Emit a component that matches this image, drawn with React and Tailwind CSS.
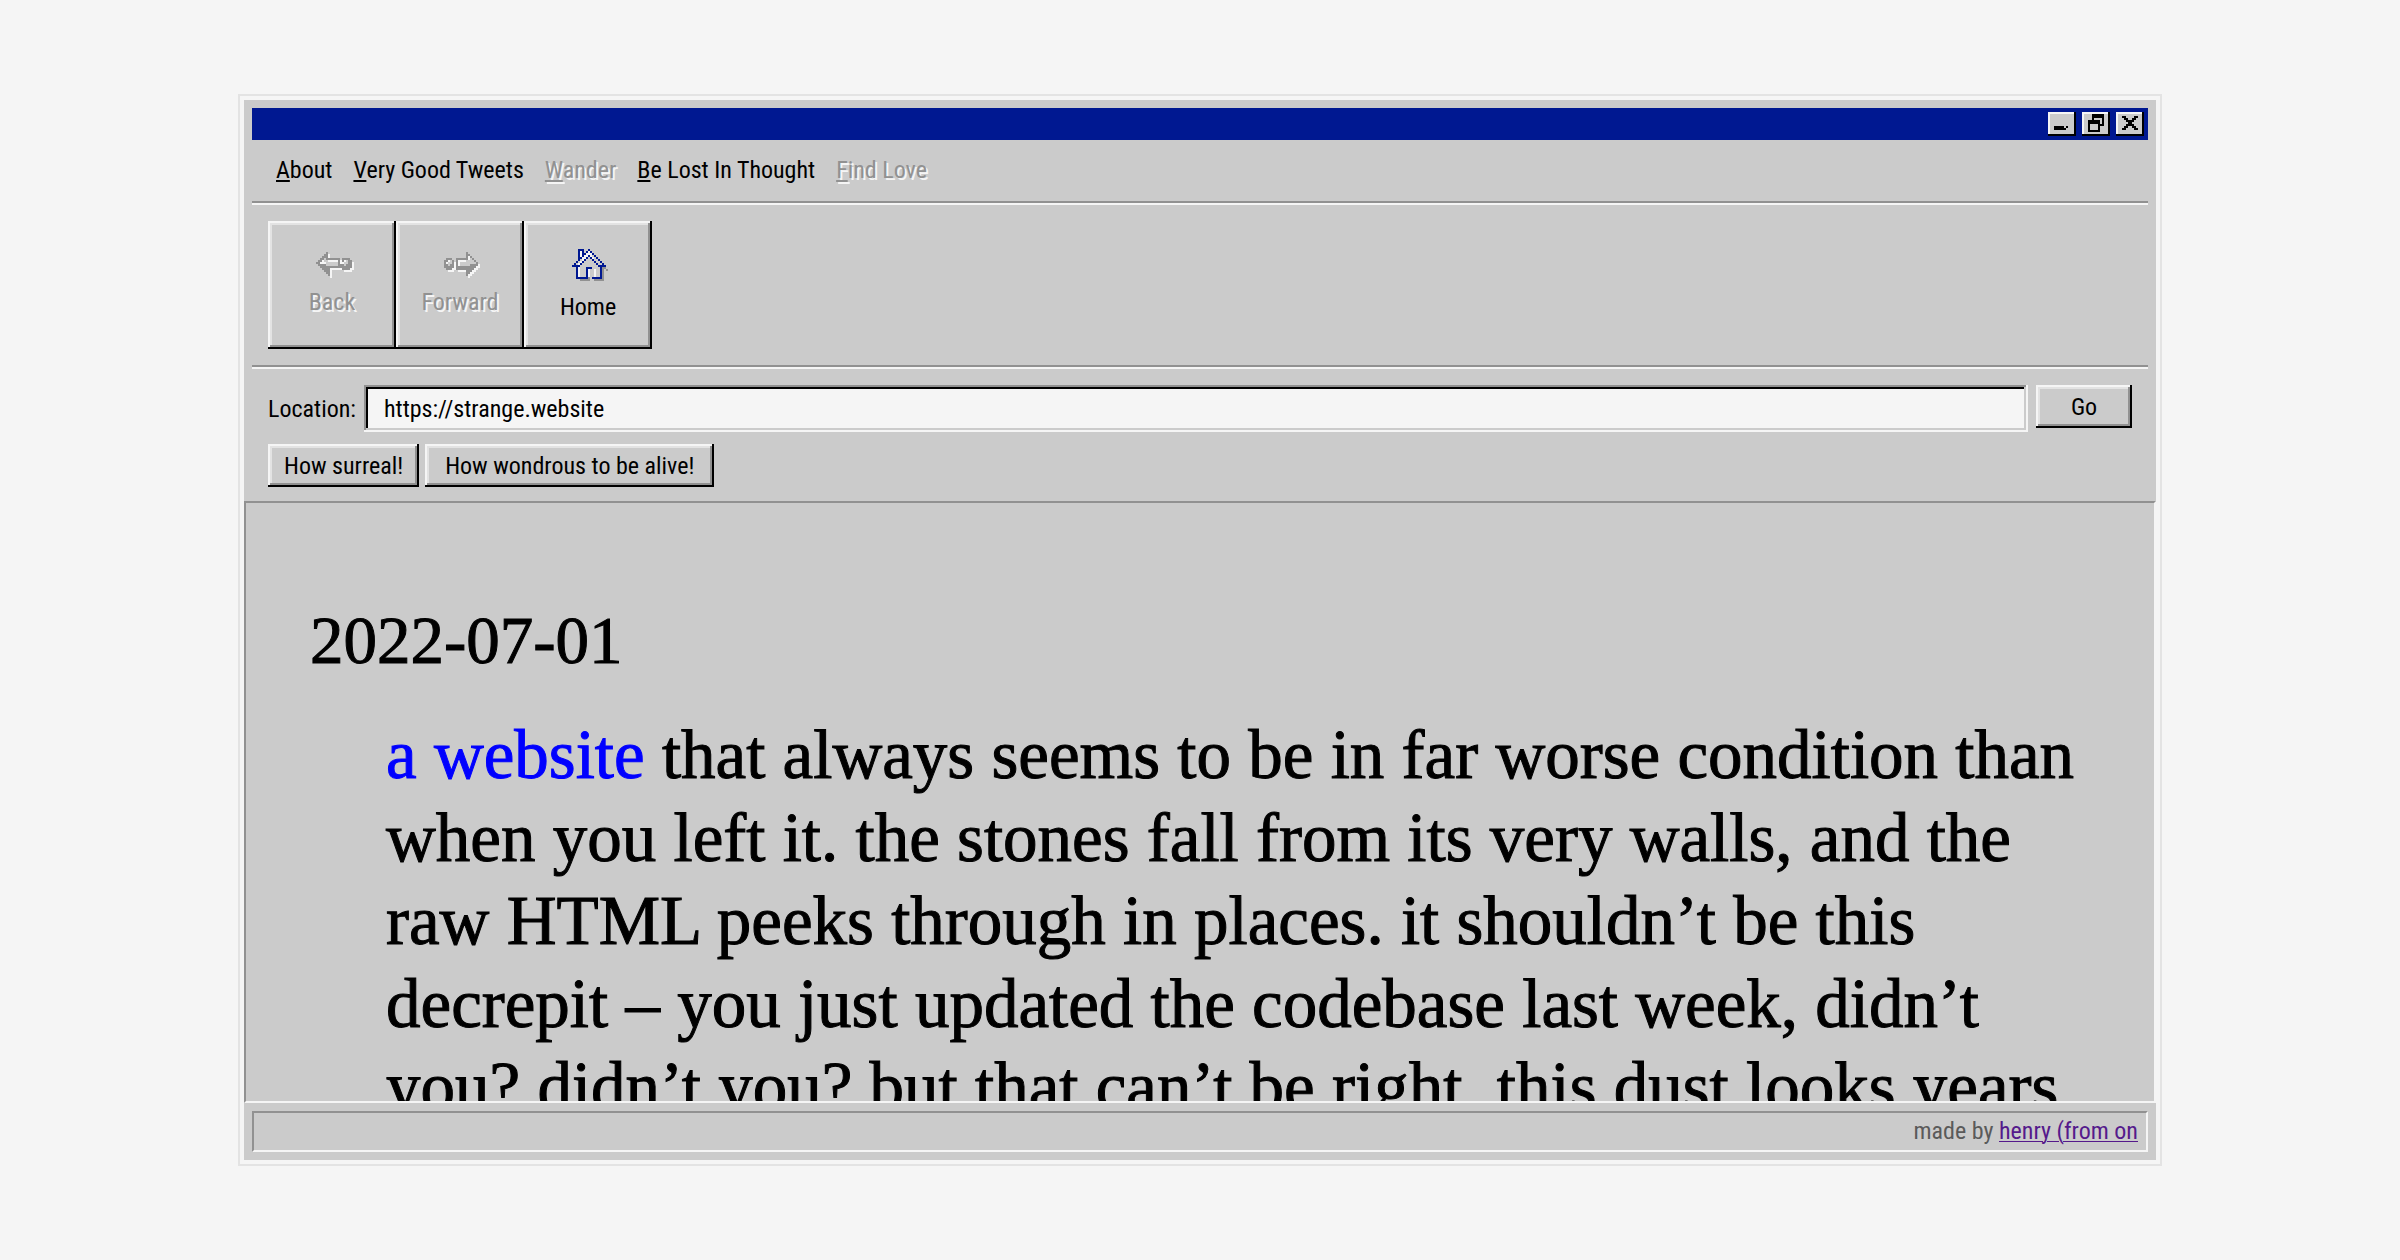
import React from "react";

const raised =
  "shadow-[inset_-2px_-2px_#000,inset_2px_2px_#f5f5f5,inset_-4px_-4px_#919191,inset_4px_4px_#e3e3e3]";

function WindowButton({ label, children }) {
  return (
    <button
      type="button"
      aria-label={label}
      className="flex h-6 w-7 items-center justify-center bg-[#cbcbcb] shadow-[inset_-2px_-2px_#000,inset_2px_2px_#f5f5f5]"
    >
      <svg width="28" height="24" viewBox="0 0 14 12" shapeRendering="crispEdges">
        {children}
      </svg>
    </button>
  );
}

function MenuItem({ label, disabled }) {
  return (
    <button
      type="button"
      disabled={disabled}
      className={
        disabled
          ? "text-[#919191] [text-shadow:2px_2px_0_#f5f5f5]"
          : "text-black"
      }
    >
      <span className="underline decoration-2 underline-offset-2">{label[0]}</span>
      {label.slice(1)}
    </button>
  );
}

function ToolButton({ label, disabled, children }) {
  return (
    <button
      type="button"
      disabled={disabled}
      className={`flex size-32 flex-col items-center justify-center bg-[#cbcbcb] ${raised} ${
        disabled
          ? "gap-2 pb-0.5 text-[#919191] [text-shadow:2px_2px_0_#f5f5f5]"
          : "gap-3 text-black"
      }`}
    >
      {children}
      <span>{label}</span>
    </button>
  );
}

const backShape =
  "M5 0h1v3h6v5H7v4H6v-1H5v-1H4V9H3V8H2V7H1V6H0V5h1V4h1V3h1V2h1V1h1zM13 3h4v1h1v4h-1v1h-4V8h-1V4h1z";

function BackIcon() {
  return (
    <svg width="44" height="28" viewBox="-3 0 22 14" shapeRendering="crispEdges">
      <path fill="#f5f5f5" transform="translate(1 1)" d={backShape} />
      <path fill="#919191" d={backShape} />
      <path fill="#cbcbcb" d="M4 3h1v1h6v3H5V6H2V5h1V4h1zM14 5h2v1h-1v1h-1zM15 4h1v1h-1z" />
      <path fill="#f5f5f5" d="M2 5h1V4h1v1h1v1H2zM12 4h1v2h-1zM13 5h1v1h-1zM14 4h1v1h-1zM6 4h5v1H6z" />
    </svg>
  );
}

const forwardShape =
  "M11 0h1v1h1v1h1v1h1v1h1v1h1v2h-1v1h-1v1h-1v1h-1v1h-1v1h-1V9H6V3h5zM1 3h3v1h1v4H4v1H1V8H0V4h1z";

function ForwardIcon() {
  return (
    <svg width="40" height="28" viewBox="-2 0 20 14" shapeRendering="crispEdges">
      <path fill="#f5f5f5" transform="translate(1 1)" d={forwardShape} />
      <path fill="#919191" d={forwardShape} />
      <path fill="#cbcbcb" d="M7 4h5V2h1v1h1v1h1v1h1v1h-3v1H7zM2 5h2v1H3v1H2zM3 4h1v1H3z" />
      <path fill="#f5f5f5" d="M7 4h4v1H8v2H7zM12 2h1v2h-1zM2 4h1v1H2zM1 5h1v1H1z" />
    </svg>
  );
}

function HomeIcon() {
  return (
    <svg width="40" height="32" viewBox="-2 0 20 16" shapeRendering="crispEdges">
      <path fill="#919191" d="M4 15h5v1H4zM8 10h1v5H8zM11 15h5v1h-5zM15 9h1v6h-1zM17 10h1v1h-1zM16 9h1v1h-1z" />
      <path
        fill="#f5f5f5"
        d="M4 1h1v4H4zM7 2h1v2H7zM6 3h1v2H6zM5 4h1v2H5zM4 6h1v1H4zM3 7h1v1H3zM8 1h1v2H8zM9 2h1v2H9zM10 4h1v1h-1zM3 9h1v5H3zM11 10h1v4h-1zM8 10h1v4H8z"
      />
      <path
        fill="#001891"
        d="M3 0h3v1H3zM3 1h1v4H3zM5 1h1v2H5zM8 0h1v1H8zM7 1h1v1H7zM9 1h1v1H9zM6 2h1v1H6zM10 2h1v1h-1zM5 3h1v1H5zM11 3h1v1h-1zM4 4h1v1H4zM12 4h1v1h-1zM3 5h1v1H3zM13 5h1v1h-1zM2 6h1v1H2zM14 6h1v1h-1zM1 7h1v1H1zM15 7h1v1h-1zM0 8h4v1H0zM14 8h3v1h-3zM8 3h1v1H8zM7 4h1v1H7zM9 4h1v1H9zM6 5h1v1H6zM10 5h1v1h-1zM5 6h1v1H5zM11 6h1v1h-1zM4 7h1v1H4zM12 7h1v1h-1zM13 8h1v1h-1zM2 9h1v6H2zM3 14h5v1H3zM7 9h1v5H7zM8 9h2v1H8zM10 14h5v1h-5zM14 9h1v5h-1z"
      />
    </svg>
  );
}

const menu = [
  { label: "About" },
  { label: "Very Good Tweets" },
  { label: "Wander", disabled: true },
  { label: "Be Lost In Thought" },
  { label: "Find Love", disabled: true },
];

const lines = [
  "when you left it. the stones fall from its very walls, and the",
  "raw HTML peeks through in places. it shouldn’t be this",
  "decrepit – you just updated the codebase last week, didn’t",
  "you? didn’t you? but that can’t be right. this dust looks years",
];

function Rule() {
  return <hr className="mx-2 h-1 border-t-2 border-b-2 border-t-[#919191] border-b-[#f5f5f5]" />;
}

export default function App() {
  return (
    <main className="flex h-screen flex-col bg-[#f5f5f5] px-[238px] py-[94px] font-['Roboto_Condensed','Liberation_Sans',sans-serif] text-2xl leading-7 text-black">
      <div className="flex min-h-0 flex-1 flex-col border-2 border-[#e3e3e3]">
        <div className="flex min-h-0 flex-1 flex-col border-4 border-[#f5f5f5] bg-[#cbcbcb]">
          <header>
            <div className="mx-2 mt-2 flex h-8 items-center justify-end gap-1.5 bg-[#001891] px-1">
              <WindowButton label="Minimize">
                <path d="M3 7h5v2H3zM8 8h1v1H8zM9 7h1v1H9z" />
              </WindowButton>
              <WindowButton label="Restore">
                <path
                  fillRule="evenodd"
                  d="M5 1h6v6H9v3H3V4h2zM6 3v1h3v2h1V3zM4 6v3h4V6z"
                />
              </WindowButton>
              <WindowButton label="Close">
                <path d="M3 2h2v1h1v1h2V3h1V2h2v1h-1v1H9v1H8v1h1v1h1v1h1v1H9V8H8V7H6v1H5v1H3V8h1V7h1V6h1V5H5V4H4V3H3z" />
              </WindowButton>
            </div>
            <nav className="flex h-[61px] items-center gap-[21px] px-8 pb-0.5" aria-label="Menu">
              {menu.map((item) => (
                <MenuItem key={item.label} {...item} />
              ))}
            </nav>
            <Rule />
            <div className="flex px-6 py-4">
              <ToolButton label="Back" disabled>
                <BackIcon />
              </ToolButton>
              <ToolButton label="Forward" disabled>
                <ForwardIcon />
              </ToolButton>
              <ToolButton label="Home">
                <HomeIcon />
              </ToolButton>
            </div>
            <Rule />
            <form className="flex items-start gap-2 px-6 pt-4" onSubmit={(e) => e.preventDefault()}>
              <label htmlFor="location" className="flex h-[47px] items-center">
                Location:
              </label>
              <input
                id="location"
                type="text"
                defaultValue="https://strange.website"
                className="h-[47px] min-w-0 flex-1 bg-[#f5f5f5] px-5 shadow-[inset_-2px_-2px_#f5f5f5,inset_2px_2px_#919191,inset_-4px_-4px_#cbcbcb,inset_4px_4px_#000] outline-none"
              />
              <button type="submit" className={`h-[43px] w-24 bg-[#cbcbcb] ${raised}`}>
                Go
              </button>
            </form>
            <div className="flex gap-1.5 px-6 pt-3 pb-3.5">
              <button type="button" className={`h-[43px] bg-[#cbcbcb] px-4 ${raised}`}>
                How surreal!
              </button>
              <button type="button" className={`h-[43px] bg-[#cbcbcb] px-5 ${raised}`}>
                How wondrous to be alive!
              </button>
            </div>
          </header>

          <article className="min-h-0 flex-1 overflow-hidden border-2 border-t-[#919191] border-r-[#f5f5f5] border-b-[#f5f5f5] border-l-[#919191] px-16 pt-24 font-['Liberation_Serif',serif] text-[69px] leading-[83px] [-webkit-text-stroke:1px]">
            <h1 className="text-[67px]">2022-07-01</h1>
            <p className="mt-8 ml-[76px] whitespace-nowrap">
              <span className="block">
                <a href="#" className="text-[#0000ff]">
                  a website
                </a>{" "}
                that always seems to be in far worse condition than
              </span>
              {lines.map((line) => (
                <span key={line} className="block">
                  {line}
                </span>
              ))}
            </p>
          </article>

          <footer className="p-2">
            <p className="border-2 border-t-[#919191] border-r-[#f5f5f5] border-b-[#f5f5f5] border-l-[#919191] px-2 pt-1 pb-[5px] text-right text-[#5a5a5a]">
              made by{" "}
              <a href="#" className="text-[#551a8b] underline decoration-1 underline-offset-2">
                henry (from on
              </a>
            </p>
          </footer>
        </div>
      </div>
    </main>
  );
}
